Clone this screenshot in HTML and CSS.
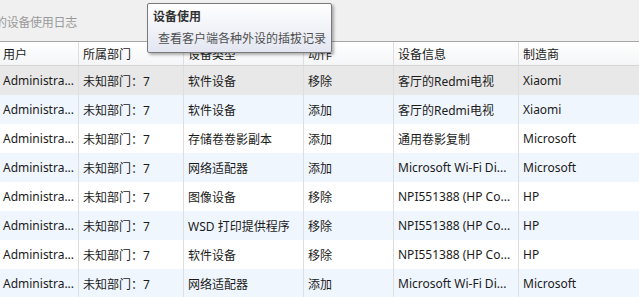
FILE: index.html
```html
<!DOCTYPE html>
<html lang="zh-CN">
<head>
<meta charset="utf-8">
<link rel="stylesheet" href="styles.css">
</head>
<body>
<div class="app">
  <div class="toolbar"><span class="title">的设备使用日志</span></div>
  <div class="grid">
    <div class="row head">
      <div class="c">用户</div><div class="c">所属部门</div><div class="c">设备类型</div><div class="c">动作</div><div class="c">设备信息</div><div class="c">制造商</div>
    </div>
    <div class="row sel">
      <div class="c">Administra...</div><div class="c">未知部门：7</div><div class="c">软件设备</div><div class="c">移除</div><div class="c">客厅的Redmi电视</div><div class="c">Xiaomi</div>
    </div>
    <div class="row alt">
      <div class="c">Administra...</div><div class="c">未知部门：7</div><div class="c">软件设备</div><div class="c">添加</div><div class="c">客厅的Redmi电视</div><div class="c">Xiaomi</div>
    </div>
    <div class="row">
      <div class="c">Administra...</div><div class="c">未知部门：7</div><div class="c">存储卷卷影副本</div><div class="c">添加</div><div class="c">通用卷影复制</div><div class="c">Microsoft</div>
    </div>
    <div class="row alt">
      <div class="c">Administra...</div><div class="c">未知部门：7</div><div class="c">网络适配器</div><div class="c">添加</div><div class="c">Microsoft Wi-Fi Di...</div><div class="c">Microsoft</div>
    </div>
    <div class="row">
      <div class="c">Administra...</div><div class="c">未知部门：7</div><div class="c">图像设备</div><div class="c">移除</div><div class="c">NPI551388 (HP Co...</div><div class="c">HP</div>
    </div>
    <div class="row alt">
      <div class="c">Administra...</div><div class="c">未知部门：7</div><div class="c">WSD 打印提供程序</div><div class="c">移除</div><div class="c">NPI551388 (HP Co...</div><div class="c">HP</div>
    </div>
    <div class="row">
      <div class="c">Administra...</div><div class="c">未知部门：7</div><div class="c">软件设备</div><div class="c">移除</div><div class="c">NPI551388 (HP Co...</div><div class="c">HP</div>
    </div>
    <div class="row alt">
      <div class="c">Administra...</div><div class="c">未知部门：7</div><div class="c">网络适配器</div><div class="c">添加</div><div class="c">Microsoft Wi-Fi Di...</div><div class="c">Microsoft</div>
    </div>
  </div>
  <div class="tip">
    <div class="tip-title">设备使用</div>
    <div class="tip-text">查看客户端各种外设的插拔记录</div>
  </div>
</div>
</body>
</html>
```

FILE: styles.css
```css
html, body {
  margin: 0;
  padding: 0;
  width: 639px;
  height: 297px;
  overflow: hidden;
  background: #ffffff;
}
.app {
  position: relative;
  width: 639px;
  height: 297px;
  overflow: hidden;
  font-family: "Noto Sans", "Noto Sans CJK SC", sans-serif;
  font-size: 12px;
  color: #1b1b1b;
}
.toolbar {
  height: 41px;
  background: #f0f0f0;
  border-bottom: 1px solid #a6a6a6;
  display: flex;
  align-items: center;
  overflow: hidden;
  position: relative;
}
.title {
  color: #9a9a9a;
  white-space: nowrap;
  margin-left: -5px;
  margin-top: 2px;
  letter-spacing: -0.3px;
}
.grid {
  display: flex;
  flex-direction: column;
}
.row {
  display: grid;
  grid-template-columns: 79px 105px 120px 90px 125px 1fr;
  height: 29px;
  background: #ffffff;
}
.row.alt { background: #f0f6fe; }
.row.sel { background: #e8e8e8; }
.row.head {
  height: 23px;
  background: linear-gradient(#ffffff, #f4f5f7);
  border-bottom: 1px solid #d5d5d5;
}
.c {
  border-right: 1px solid #dedede;
  padding-left: 4px;
  display: flex;
  align-items: center;
  white-space: nowrap;
  overflow: hidden;
}
.c:first-child { padding-left: 3px; }
.c:last-child { border-right: none; }
.tip {
  position: absolute;
  left: 147px;
  top: 3px;
  width: 183px;
  height: 48px;
  border: 1px solid #7a7a7a;
  border-radius: 2px;
  background: linear-gradient(#ffffff, #e3e6f1);
  box-shadow: 2px 2px 3px rgba(0,0,0,0.3);
  display: flex;
  flex-direction: column;
}
.tip-title {
  font-weight: bold;
  color: #333;
  margin: 5px 0 0 5px;
  line-height: 16px;
}
.tip-text {
  color: #505050;
  margin: 6px 0 0 10px;
  line-height: 16px;
  white-space: nowrap;
}
```
